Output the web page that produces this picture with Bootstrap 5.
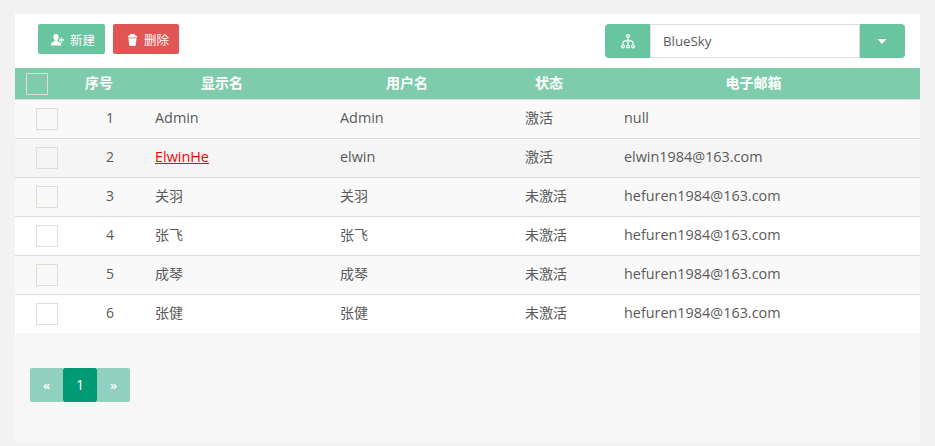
<!DOCTYPE html>
<html lang="zh-CN">
<head>
<meta charset="utf-8">
<meta name="viewport" content="width=device-width, initial-scale=1">
<title>用户管理</title>
<link href="https://cdn.jsdelivr.net/npm/bootstrap@5.3.0/dist/css/bootstrap.min.css" rel="stylesheet">
<style>
body{background:#f2f2f2;color:#5a5a5a;font-family:"Open Sans","Noto Sans CJK SC",sans-serif;font-size:14px;line-height:20px}
.panel{margin:14px 15px 0;height:428px;background:#f7f7f7}
.toolbar{height:54px;padding:10px 15px 0 23px}
.toolbar .btn{--bs-btn-color:#fff;--bs-btn-hover-color:#fff;border:0}
.btn-mint{--bs-btn-bg:#69c4a0;--bs-btn-hover-bg:#5bb592}
.btn-coral{--bs-btn-bg:#e15554;--bs-btn-hover-bg:#d04443}
.btn-tool{height:30px;padding:2px 10px 0 13px;font-size:12.5px;line-height:28px;border-radius:2px}
.btn-tool svg{margin-right:5px}
.btn-tool span{padding-top:1px}
.org-select{width:300px;height:34px}
.org-select .input-group-text,.org-select .btn{width:45px;padding:0;border:0;background:#69c4a0;color:#fff;justify-content:center;border-radius:4px}
.org-select>.form-control,.org-select>.btn{margin-left:0!important}
.org-select>.btn{padding-right:1px}
.org-select .form-control{border:1px solid #ddd;border-radius:0;padding:1px 12px 0;font-size:13.3px;color:#5a5a5a;box-shadow:none}
.user-table{table-layout:fixed;--bs-table-bg:transparent;--bs-table-color:#5a5a5a}
.user-table th{height:31px;padding:0 1px 0 0;background:#7fccad;color:#fff;border:0;text-align:center;vertical-align:middle}
.user-table td{height:39px;padding:0 0 1px 25px;border:0;border-top:1px solid #dcdcdc;background:#fff;vertical-align:middle;white-space:nowrap}
.user-table td:lang(en){font-size:14.4px}
.user-table tr.alt td{background:#f9f9f9}
.user-table tr.current td{background:#f5f5f5}
.user-table th.pick{padding:1px 0 0 11px}
.user-table td.pick{padding:0 0 0 21px}
.user-table td.num{padding:0 16px 1px 0;text-align:right}
.user-table th.mail{padding-right:12px}
.user-table .form-check-input{display:block;width:22px;height:22px;margin:0;border:1px solid #deded2;border-radius:0;background-color:transparent}
.user-table .name-link{color:#f00}
.pager{padding:35px 15px 0}
.pagination{--bs-pagination-color:#fff;--bs-pagination-bg:#91cfbe;--bs-pagination-hover-color:#fff;--bs-pagination-hover-bg:#7fc4b1;--bs-pagination-active-bg:#009a74;--bs-pagination-border-radius:2px}
.pagination .page-link{width:33px;height:34px;padding:0;border:0;margin:0!important;line-height:35px;text-align:center;font-size:13px;font-weight:600}
.pagination .active .page-link{width:34px;border-radius:2px;font-size:14.4px;font-weight:400;line-height:33px}
</style>
</head>
<body>
<main class="panel">
  <div class="toolbar d-flex justify-content-between align-items-start bg-white">
    <div class="d-flex gap-2">
      <button class="btn btn-mint btn-tool d-flex align-items-center" type="button">
        <svg width="14" height="12" viewBox="0 0 14 12" fill="#fff"><path d="M5 0C3.300 0 2.400 1.100 2.400 2.800C2.400 4.200 2.900 5.200 3.600 5.800V7.200L1 8.400C.3 8.800 0 9.300 0 10V11.500H10.200V10C10.200 9.300 9.900 8.800 9.200 8.400L6.500 7.200V5.800C7.200 5.200 7.700 4.200 7.700 2.800C7.700 1.100 6.700 0 5 0ZM9.800 3.400H11.200V5.300H13.100V6.700H11.200V8.600H9.800V6.700H8V5.300H9.800Z"/></svg>
        <span>新建</span>
      </button>
      <button class="btn btn-coral btn-tool d-flex align-items-center" type="button">
        <svg width="13" height="12" viewBox="0 0 13 12" fill="#fff"><path d="M4.500 0H8.500L9 1.200C10.300 1.400 11.100 1.900 11.100 2.600V3.500H1.900V2.600C1.900 1.900 2.700 1.400 4 1.200ZM2.400 4.300H10.600L9.700 11.100C9.600 11.600 9.200 12 8.600 12H4.400C3.800 12 3.400 11.600 3.300 11.100Z"/></svg>
        <span>删除</span>
      </button>
    </div>
    <div class="input-group org-select flex-nowrap">
      <span class="input-group-text">
        <svg width="14" height="15" viewBox="0 0 14 15" fill="none" stroke="#fff" stroke-width="1.200"><circle cx="7" cy="2.100" r="1.400"/><path d="M7 3.500V11M2 11V9C2 7.500 2.900 6.800 4.200 6.800H9.800C11.100 6.800 12 7.500 12 9V11"/><circle cx="2" cy="12.400" r="1.400"/><circle cx="7" cy="12.400" r="1.400"/><circle cx="12" cy="12.400" r="1.400"/></svg>
      </span>
      <input class="form-control" type="text" value="BlueSky" aria-label="组织">
      <button class="btn d-flex align-items-center" type="button" aria-label="展开"><svg width="10" height="5" viewBox="0 0 10 5" fill="#fff"><path d="M.5 0H9.500L5 5Z"/></svg></button>
    </div>
  </div>
  <table class="table user-table mb-0">
    <colgroup><col style="width:54px"><col style="width:61px"><col style="width:185px"><col style="width:185px"><col style="width:99px"><col></colgroup>
    <thead>
      <tr><th class="pick"><input class="form-check-input" type="checkbox" aria-label="全选"></th><th>序号</th><th>显示名</th><th>用户名</th><th>状态</th><th class="mail">电子邮箱</th></tr>
    </thead>
    <tbody>
      <tr class="alt"><td class="pick"><input class="form-check-input" type="checkbox"></td><td class="num">1</td><td lang="en">Admin</td><td lang="en">Admin</td><td>激活</td><td lang="en">null</td></tr>
      <tr class="current"><td class="pick"><input class="form-check-input" type="checkbox"></td><td class="num">2</td><td lang="en"><a class="name-link" href="#">ElwinHe</a></td><td lang="en">elwin</td><td>激活</td><td lang="en">elwin1984@163.com</td></tr>
      <tr class="alt"><td class="pick"><input class="form-check-input" type="checkbox"></td><td class="num">3</td><td>关羽</td><td>关羽</td><td>未激活</td><td lang="en">hefuren1984@163.com</td></tr>
      <tr><td class="pick"><input class="form-check-input" type="checkbox"></td><td class="num">4</td><td>张飞</td><td>张飞</td><td>未激活</td><td lang="en">hefuren1984@163.com</td></tr>
      <tr class="alt"><td class="pick"><input class="form-check-input" type="checkbox"></td><td class="num">5</td><td>成琴</td><td>成琴</td><td>未激活</td><td lang="en">hefuren1984@163.com</td></tr>
      <tr><td class="pick"><input class="form-check-input" type="checkbox"></td><td class="num">6</td><td>张健</td><td>张健</td><td>未激活</td><td lang="en">hefuren1984@163.com</td></tr>
    </tbody>
  </table>
  <nav class="pager">
    <ul class="pagination mb-0">
      <li class="page-item"><a class="page-link" href="#">«</a></li>
      <li class="page-item active"><a class="page-link" href="#">1</a></li>
      <li class="page-item"><a class="page-link" href="#">»</a></li>
    </ul>
  </nav>
</main>
<script src="https://cdn.jsdelivr.net/npm/bootstrap@5.3.0/dist/js/bootstrap.bundle.min.js"></script>
</body>
</html>
